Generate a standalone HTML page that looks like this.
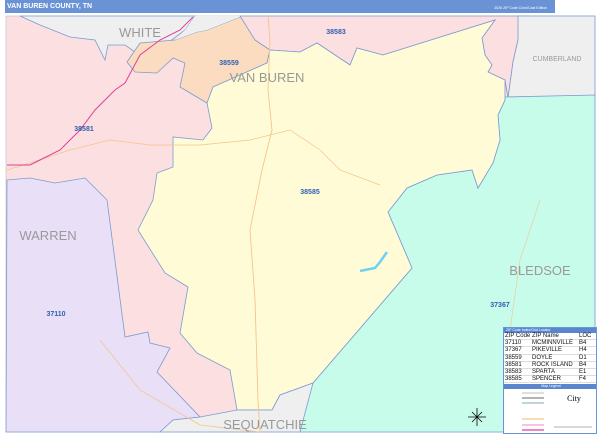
<!DOCTYPE html>
<html><head><meta charset="utf-8"><style>
html,body{margin:0;padding:0;width:600px;height:436px;overflow:hidden;background:#fff;font-family:"Liberation Sans",sans-serif}
.bar{position:absolute;left:5px;top:0;width:548px;height:13px;background:#6a93d6;color:#fff;font-weight:bold;font-size:7px;line-height:13px;padding-left:2px}
.bar .ed{position:absolute;right:8px;top:5px;font-size:3.5px;line-height:6px;font-weight:normal}
svg{position:absolute;left:0;top:0}
.lg{position:absolute;left:503px;top:327px;width:92px;height:105px;background:#fff;border:1px solid #6a93d6;font-size:6px;overflow:hidden}
.lg .h{background:#5a86d0;color:#fff;font-size:3.5px;height:5px;line-height:5px;padding-left:2px}
.row{position:relative;height:6.2px;line-height:6.2px;font-size:6px;color:#111;border-bottom:0.5px solid #ddd}
.row span{position:absolute}
.row .a{left:1px}.row .b{left:28px}.row .c{left:75px}
</style></head><body>
<div class="bar">VAN BUREN COUNTY, TN<span class="ed">2026 ZIP Code Color/Cast Edition</span></div>
<svg width="600" height="436" viewBox="0 0 600 436">
<rect x="6" y="16" width="589" height="416" fill="#fbdfe1" stroke="#bbb" stroke-width="0.6"/>
<polygon points="20,16 195,16 185,30 165,45 145,45 135,52 125,45 108,45 105,60 95,40 70,37 40,25" fill="#efefef" stroke="#7b9bd0" stroke-width="0.8"/>
<polygon points="7,180 30,178 55,183 85,178 105,198 107,200 125,337 148,332 150,343 170,348 157,372 200,417 173,420 160,432 6,432" fill="#e9e0f8" stroke="#7b9bd0" stroke-width="0.8"/>
<polygon points="127,62 135,72 157,73 173,58 185,63 180,87 207,103 213,87 267,63 270,50 255,40 250,18 240,17 207,30 197,32 175,40 140,43" fill="#fcdcc0" stroke="#7b9bd0" stroke-width="0.8"/>
<polygon points="195,16 250,16 240,17 207,30 197,32 175,40 185,30" fill="#efefef"/>
<polygon points="240,16 528,16 518,40 513,62 508,98 505,80 488,72 492,65 485,55 482,38 495,20 383,55 357,48 350,65 317,43 300,52 270,50 255,40" fill="#fbdfe1" stroke="#7b9bd0" stroke-width="0.8"/>
<polygon points="518,16 595,16 595,96 508,98 513,62 518,40" fill="#efefef" stroke="#7b9bd0" stroke-width="0.8"/>
<polygon points="505,97 595,95 595,432 300,432 310,387 313,383 412,268 388,212 407,188 437,175 472,170 478,188 493,163 500,140 498,115 505,100" fill="#c8fcea" stroke="#7b9bd0" stroke-width="0.8"/>
<polygon points="207,103 213,87 267,63 270,50 300,52 317,43 350,65 357,48 383,55 495,20 482,38 485,55 492,65 488,72 505,80 505,100 498,115 500,140 493,163 478,188 472,170 437,175 407,188 388,212 412,268 313,383 280,395 272,410 237,410 230,370 197,353 180,333 188,287 165,273 138,230 153,200 157,173 173,167 173,137 203,140 212,128" fill="#fffbd6" stroke="#7b9bd0" stroke-width="0.8"/>
<polygon points="160,432 173,420 200,417 237,410 272,410 280,395 313,383 300,432" fill="#efefef" stroke="#7b9bd0" stroke-width="0.8"/>
<polyline points="268,16 270,40 268,90 272,130 262,170 250,230 255,300 258,400 260,432" fill="none" stroke="#f5c58a" stroke-width="0.9"/>
<polyline points="7,170 30,163 70,150 110,140 150,145 200,145 250,140 290,130 320,150 340,170 380,185" fill="none" stroke="#f5c58a" stroke-width="0.7"/>
<polyline points="193,17 180,30 160,40 140,55 125,83 115,90 95,110 80,130 60,150 40,160 30,165 7,165" fill="none" stroke="#e0409a" stroke-width="1"/>
<polyline points="100,340 140,390 200,425 260,432" fill="none" stroke="#f5c58a" stroke-width="0.8"/>
<polyline points="360,271 375,268 380,262 387,252" fill="none" stroke="#6fd0f5" stroke-width="2.5"/>
<polyline points="540,200 520,260 510,330" fill="none" stroke="#e8c890" stroke-width="0.6"/>
<g fill="#999" font-size="13" text-anchor="middle">
<text x="140" y="37">WHITE</text>
<text x="267" y="82">VAN BUREN</text>
<text x="48" y="240">WARREN</text>
<text x="540" y="275">BLEDSOE</text>
<text x="265" y="429">SEQUATCHIE</text>
<text x="557" y="61" font-size="7">CUMBERLAND</text>
</g>
<g fill="#2f5fb0" font-size="7" font-weight="bold" text-anchor="middle">
<text x="336" y="34">38583</text>
<text x="229" y="65">38559</text>
<text x="84" y="131">38581</text>
<text x="310" y="194">38585</text>
<text x="56" y="316">37110</text>
<text x="500" y="307">37367</text>
</g>
<g stroke="#000" stroke-width="0.8"><line x1="477" y1="408" x2="477" y2="426"/><line x1="468" y1="417" x2="486" y2="417"/><line x1="472" y1="412" x2="482" y2="422"/><line x1="482" y1="412" x2="472" y2="422"/></g>
</svg>
<div class="lg"><div class="h">ZIP Code Index/Grid Locator</div>
<div class="row"><span class="a">ZIP Code</span><span class="b">ZIP Name</span><span class="c">LOC</span></div>
<div class="row"><span class="a">37110</span><span class="b">MCMINNVILLE</span><span class="c">B4</span></div>
<div class="row"><span class="a">37367</span><span class="b">PIKEVILLE</span><span class="c">H4</span></div>
<div class="row"><span class="a">38559</span><span class="b">DOYLE</span><span class="c">D1</span></div>
<div class="row"><span class="a">38581</span><span class="b">ROCK ISLAND</span><span class="c">B4</span></div>
<div class="row"><span class="a">38583</span><span class="b">SPARTA</span><span class="c">E1</span></div>
<div class="row"><span class="a">38585</span><span class="b">SPENCER</span><span class="c">F4</span></div>
<div class="h" style="margin-top:1px;text-align:center">Map Legend</div>
<svg width="92" height="52" style="position:relative">
<g stroke-width="1.2"><line x1="18" y1="4" x2="40" y2="4" stroke="#ccc"/><line x1="18" y1="9" x2="40" y2="9" stroke="#888"/><line x1="18" y1="14" x2="40" y2="14" stroke="#9bc"/><line x1="18" y1="30" x2="40" y2="30" stroke="#f5c58a"/><line x1="18" y1="36" x2="40" y2="36" stroke="#f0a0d0"/><line x1="18" y1="41" x2="40" y2="41" stroke="#e0409a"/><line x1="18" y1="46" x2="40" y2="46" stroke="#6c6"/></g>
<text x="70" y="12" font-size="8" font-family="Liberation Serif" text-anchor="middle">City</text>
<line x1="50" y1="38" x2="88" y2="38" stroke="#666" stroke-width="0.5"/>
</svg>
</div>
</body></html>
